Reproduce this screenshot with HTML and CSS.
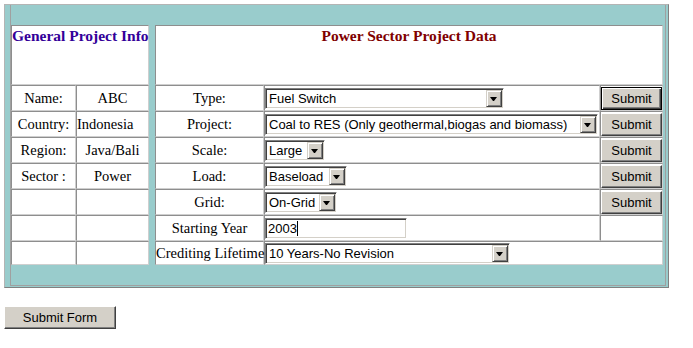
FILE: index.html
```html
<!DOCTYPE html>
<html lang="en">
<head>
    <meta charset="UTF-8">
    <title>Power Sector Project Data</title>
    <link rel="stylesheet" href="styles.css">
</head>
<body>
<form class="page">
    <div class="frame">
        <div class="inner">
            <div class="band"></div>
            <div class="panels">
                <table class="grid general">
                    <colgroup><col class="c-label"><col class="c-value"></colgroup>
                    <tr class="head"><td colspan="2" class="title blue">General Project Info</td></tr>
                    <tr><td>Name:</td><td>ABC</td></tr>
                    <tr><td>Country:</td><td class="left">Indonesia</td></tr>
                    <tr><td>Region:</td><td>Java/Bali</td></tr>
                    <tr><td>Sector :</td><td>Power</td></tr>
                    <tr><td>&nbsp;</td><td>&nbsp;</td></tr>
                    <tr><td>&nbsp;</td><td>&nbsp;</td></tr>
                    <tr class="last"><td>&nbsp;</td><td>&nbsp;</td></tr>
                </table>
                <table class="grid power">
                    <colgroup><col class="c-field"><col class="c-input"><col class="c-btn"></colgroup>
                    <tr class="head"><td colspan="3" class="title red">Power Sector Project Data</td></tr>
                    <tr>
                        <td>Type:</td>
                        <td class="ctl"><span class="drop w-type"><select name="type"><option>Fuel Switch</option></select><span class="arrow"></span></span></td>
                        <td><button type="button" class="btn default">Submit</button></td>
                    </tr>
                    <tr>
                        <td>Project:</td>
                        <td class="ctl"><span class="drop w-project"><select name="project"><option>Coal to RES (Only geothermal,biogas and biomass)</option></select><span class="arrow"></span></span></td>
                        <td><button type="button" class="btn">Submit</button></td>
                    </tr>
                    <tr>
                        <td>Scale:</td>
                        <td class="ctl"><span class="drop w-scale"><select name="scale"><option>Large</option></select><span class="arrow"></span></span></td>
                        <td><button type="button" class="btn">Submit</button></td>
                    </tr>
                    <tr>
                        <td>Load:</td>
                        <td class="ctl"><span class="drop w-load"><select name="load"><option>Baseload</option></select><span class="arrow"></span></span></td>
                        <td><button type="button" class="btn">Submit</button></td>
                    </tr>
                    <tr>
                        <td>Grid:</td>
                        <td class="ctl"><span class="drop w-grid"><select name="grid"><option>On-Grid</option></select><span class="arrow"></span></span></td>
                        <td><button type="button" class="btn">Submit</button></td>
                    </tr>
                    <tr>
                        <td>Starting Year</td>
                        <td class="ctl"><span class="field"><input type="text" name="year" value="2003"><span class="caret"></span></span></td>
                        <td>&nbsp;</td>
                    </tr>
                    <tr class="last">
                        <td>Crediting Lifetime</td>
                        <td class="ctl" colspan="2"><span class="drop w-life"><select name="lifetime"><option>10 Years-No Revision</option></select><span class="arrow"></span></span></td>
                    </tr>
                </table>
            </div>
            <div class="band"></div>
        </div>
    </div>
    <button type="submit" class="btn wide">Submit Form</button>
</form>
</body>
</html>
```

FILE: styles.css
```css
body {
    margin: 0;
    padding: 4px;
    background: #fff;
    color: #000;
    font-family: "Liberation Serif", "Times New Roman", serif;
    font-size: 14.5px;
}
.frame {
    width: 665px;
    box-sizing: border-box;
    background: #99cccc;
    border: 1px solid;
    border-color: #b4b4b4 #808080 #808080 #b4b4b4;
    padding: 0 2px 1px 5px;
}
.inner {
    border: 1px solid #a0a0a0;
    border-top: 0;
}
.band {
    height: 20px;
}
.panels {
    display: flex;
    align-items: flex-start;
    gap: 6px;
}
.grid {
    border-collapse: separate;
    border-spacing: 0;
    table-layout: fixed;
    background: #fff;
}
.general {
    width: 138px;
}
.power {
    width: 508px;
}
.c-label { width: 65px; }
.c-value { width: 73px; }
.c-field { width: 109px; }
.c-input { width: 336px; }
.c-btn { width: 63px; }
.grid td {
    box-sizing: border-box;
    height: 26px;
    padding: 0;
    border: 1px solid;
    border-color: #8e8e8e #cfcfcf #cfcfcf #8e8e8e;
    text-align: center;
    vertical-align: middle;
    white-space: nowrap;
}
.grid .head td {
    height: 60px;
    vertical-align: top;
    padding-top: 1px;
}
.grid .last td {
    height: 24px;
}
.grid td.left {
    text-align: left;
}
.grid td.ctl {
    text-align: left;
}
.title {
    font-weight: bold;
    font-size: 15.5px;
}
.blue {
    color: #330099;
}
.red {
    color: #800000;
}

/* classic windows controls */
.drop,
.field {
    position: relative;
    display: block;
    box-sizing: border-box;
    height: 21px;
    padding: 1px;
    background: #fff;
    border: 1px solid;
    border-color: #808080 #fff #fff #808080;
    box-shadow: inset 1px 1px #404040, inset -1px -1px #d4d0c8;
}
.drop select,
.field input {
    display: block;
    box-sizing: border-box;
    width: 100%;
    height: 17px;
    margin: 0;
    border: 0;
    outline: none;
    background: #fff;
    color: #000;
    font-family: "Liberation Sans", Arial, sans-serif;
    font-size: 13px;
    appearance: none;
    -webkit-appearance: none;
}
.drop select {
    padding: 0 18px 0 2px;
}
.field input {
    padding: 0 0 0 1px;
}
.arrow {
    position: absolute;
    top: 1px;
    right: 1px;
    width: 16px;
    height: 17px;
    box-sizing: border-box;
    background: #d4d0c8;
    border: 1px solid;
    border-color: #d4d0c8 #404040 #404040 #d4d0c8;
    box-shadow: inset 1px 1px #fff, inset -1px -1px #808080;
    pointer-events: none;
}
.arrow::before {
    content: "";
    position: absolute;
    left: 3px;
    top: 6px;
    width: 1px;
    height: 0;
    border-left: 3px solid transparent;
    border-right: 3px solid transparent;
    border-top: 4px solid #000;
}
.caret {
    position: absolute;
    left: 31px;
    top: 2px;
    width: 1px;
    height: 15px;
    background: #000;
}
.w-type { width: 239px; }
.w-project { width: 333px; }
.w-scale { width: 60px; }
.w-load { width: 82px; }
.w-grid { width: 72px; }
.w-life { width: 245px; }
.field { width: 142px; }

.btn {
    display: block;
    width: 61px;
    height: 23px;
    margin: 0;
    padding: 0;
    background: #d4d0c8;
    color: #000;
    font-family: "Liberation Sans", Arial, sans-serif;
    font-size: 13px;
    border: 1px solid;
    border-color: #fff #404040 #404040 #fff;
    box-shadow: inset -1px -1px #808080;
    cursor: pointer;
}
.btn.default {
    border-color: #000;
    box-shadow: inset 1px 1px #fff, inset -1px -1px #404040, inset -2px -2px #808080;
}
.btn.wide {
    width: 112px;
    margin-top: 18px;
}
```
